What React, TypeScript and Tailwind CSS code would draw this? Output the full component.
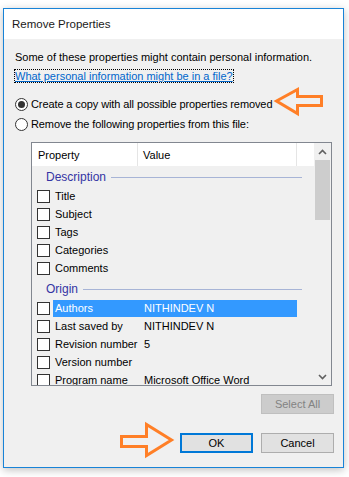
import React from 'react';

const font = { fontFamily: '"Liberation Sans", Arial, sans-serif' };

interface Row {
  label: string;
  value?: string;
  selected?: boolean;
}

const description: Row[] = [
  { label: 'Title' },
  { label: 'Subject' },
  { label: 'Tags' },
  { label: 'Categories' },
  { label: 'Comments' },
];

const origin: Row[] = [
  { label: 'Authors', value: 'NITHINDEV N', selected: true },
  { label: 'Last saved by', value: 'NITHINDEV N' },
  { label: 'Revision number', value: '5' },
  { label: 'Version number' },
  { label: 'Program name', value: 'Microsoft Office Word' },
];

function GroupHeader({ title }: { title: string }) {
  return (
    <div className="flex items-center h-[20px] pl-[14px] pr-[12px] gap-[5px]">
      <span className="text-[#3434a4] text-[12px] leading-[20px]">{title}</span>
      <div className="flex-1 h-px bg-[#a7b4d6]" />
    </div>
  );
}

function PropRow({ row }: { row: Row }) {
  return (
    <div className="flex items-center h-[18px] pl-[5px]">
      <div className="w-[13px] h-[13px] border border-[#333333] bg-white shrink-0" />
      <div
        className={
          'flex items-center h-[17px] ml-[3px] w-[244px] overflow-hidden ' +
          (row.selected ? 'bg-[#3399ff] text-white' : 'text-black')
        }
      >
        <span className="w-[91px] shrink-0 pl-[2px] whitespace-nowrap overflow-hidden">{row.label}</span>
        <span className="whitespace-nowrap">{row.value ?? ''}</span>
      </div>
    </div>
  );
}

function Radio({ checked, label }: { checked?: boolean; label: string }) {
  return (
    <div className="flex items-center h-[20px] pl-[11px] gap-[3px]">
      <div className="w-[13px] h-[13px] rounded-full border border-[#333333] bg-white flex items-center justify-center shrink-0">
        {checked && <div className="w-[7px] h-[7px] rounded-full bg-[#333333]" />}
      </div>
      <span className="whitespace-nowrap tracking-[-0.1px]">{label}</span>
    </div>
  );
}

export default function App() {
  return (
    <div className="w-[349px] h-[477px] bg-white relative overflow-hidden text-[11px] leading-[16px] text-black" style={font}>
      <div className="ml-[3px] mt-[8px] w-[341px] h-[460px] border border-[#1883d7] bg-[#f0f0f0] flex flex-col shadow-[0_2px_8px_rgba(0,0,0,0.25)]">
        {/* Title bar */}
        <div className="h-[30px] bg-white flex items-center pl-[8px] text-[11.5px] text-[#1a1a1a] shrink-0">
          Remove Properties
        </div>

        {/* Body */}
        <div className="flex flex-col pt-[10px]">
          <p className="pl-[11px] leading-[16px] whitespace-nowrap">Some of these properties might contain personal information.</p>
          <div className="pl-[11px] mt-[3px] h-[14px]">
            <span className="inline-block leading-[12px] text-[#0066cc] underline outline outline-1 outline-dotted outline-black whitespace-nowrap">
              What personal information might be in a file?
            </span>
          </div>
          <div className="mt-[12px] flex flex-col">
            <Radio checked label="Create a copy with all possible properties removed" />
            <Radio label="Remove the following properties from this file:" />
          </div>

          {/* List */}
          <div className="ml-[27px] mt-[8px] w-[301px] h-[244px] border border-[#828790] flex overflow-hidden shrink-0">
            <div className="flex-1 flex flex-col overflow-hidden">
              <div className="h-[23px] bg-white flex shrink-0">
                <div className="w-[106px] border-r border-[#e5e5e5] pl-[6px] flex items-center">Property</div>
                <div className="w-[159px] border-r border-[#e5e5e5] pl-[5px] flex items-center">Value</div>
                <div className="flex-1" />
              </div>
              <div className="flex flex-col pt-[1px]">
                <GroupHeader title="Description" />
                {description.map((r) => (
                  <PropRow key={r.label} row={r} />
                ))}
                <div className="h-[2px]" />
                <GroupHeader title="Origin" />
                {origin.map((r) => (
                  <PropRow key={r.label} row={r} />
                ))}
              </div>
            </div>
            {/* Scrollbar */}
            <div className="w-[17px] flex flex-col bg-[#f0f0f0] shrink-0">
              <div className="h-[17px] flex items-center justify-center">
                <svg width="9" height="6" viewBox="0 0 9 6">
                  <path d="M1 5 L4.5 1.5 L8 5" stroke="#606060" strokeWidth="1.6" fill="none" />
                </svg>
              </div>
              <div className="h-[60px] mx-[1px] bg-[#cdcdcd]" />
              <div className="flex-1" />
              <div className="h-[17px] flex items-center justify-center">
                <svg width="9" height="6" viewBox="0 0 9 6">
                  <path d="M1 1 L4.5 4.5 L8 1" stroke="#606060" strokeWidth="1.6" fill="none" />
                </svg>
              </div>
            </div>
          </div>

          <div className="flex justify-end pr-[9px] mt-[8px]">
            <button className="w-[73px] h-[20px] bg-[#cccccc] border border-[#bfbfbf] text-[#838383]">Select All</button>
          </div>
          <div className="flex justify-end pr-[9px] mt-[19px] gap-[8px]">
            <button className="w-[73px] h-[20px] bg-[#e1e1e1] border-2 border-[#0078d7]">OK</button>
            <button className="w-[73px] h-[20px] bg-[#e1e1e1] border border-[#adadad]">Cancel</button>
          </div>
        </div>
      </div>

      {/* Annotation arrows */}
      <svg className="absolute left-[272px] top-[86px]" width="54" height="32" viewBox="272 86 54 32">
        <polygon
          points="276.5,101 297.5,89.5 297.5,96.5 321.5,96.5 321.5,105.5 297.5,105.5 297.5,113.5"
          fill="none"
          stroke="#ff7f27"
          strokeWidth="3"
          strokeLinejoin="miter"
        />
      </svg>
      <svg className="absolute left-[118px] top-[421px]" width="58" height="38" viewBox="118 421 58 38">
        <polygon
          points="121.5,436.5 146.5,436.5 146.5,424.5 171.5,440 146.5,455.5 146.5,446.5 121.5,446.5"
          fill="none"
          stroke="#ff7f27"
          strokeWidth="3"
        />
      </svg>
    </div>
  );
}
